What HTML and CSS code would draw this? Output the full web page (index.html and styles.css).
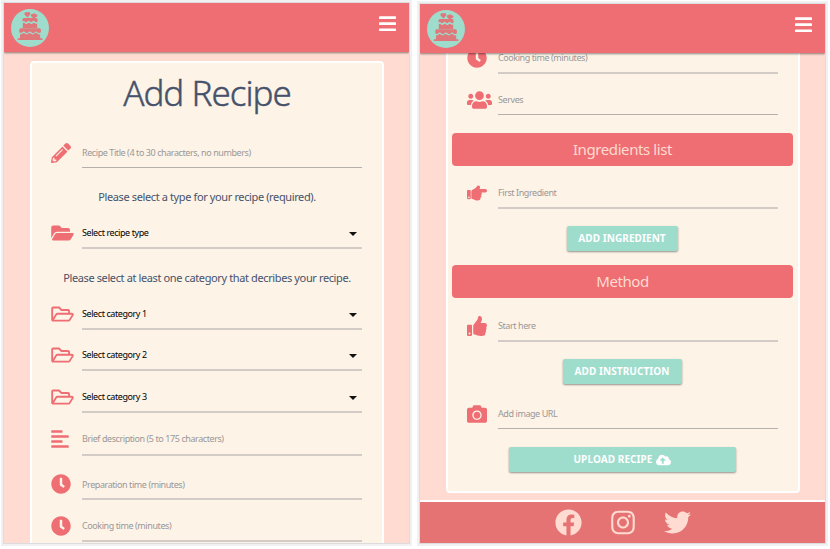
FILE: index.html
```html
<!DOCTYPE html>
<html lang="en">
<head>
<meta charset="utf-8">
<title>Add Recipe</title>
<link rel="stylesheet" href="styles.css">
</head>
<body>
<svg class="defs" width="0" height="0" aria-hidden="true">
  <symbol id="bars" viewBox="0 0 448 512"><path d="M16 132h416c8.837 0 16-7.163 16-16V76c0-8.837-7.163-16-16-16H16C7.163 60 0 67.163 0 76v40c0 8.837 7.163 16 16 16zm0 160h416c8.837 0 16-7.163 16-16v-40c0-8.837-7.163-16-16-16H16c-8.837 0-16 7.163-16 16v40c0 8.837 7.163 16 16 16zm0 160h416c8.837 0 16-7.163 16-16v-40c0-8.837-7.163-16-16-16H16c-8.837 0-16 7.163-16 16v40c0 8.837 7.163 16 16 16z"/></symbol>
  <symbol id="pencil" viewBox="0 0 512 512"><path d="M497.9 142.1l-46.1 46.1c-4.7 4.7-12.3 4.7-17 0l-111-111c-4.7-4.7-4.7-12.3 0-17l46.1-46.1c18.7-18.7 49.1-18.7 67.9 0l60.1 60.1c18.8 18.7 18.8 49.1 0 67.9zM284.2 99.8L21.6 362.4.4 483.9c-2.9 16.4 11.4 30.6 27.8 27.8l121.5-21.3 262.6-262.6c4.7-4.7 4.7-12.3 0-17l-111-111c-4.8-4.7-12.4-4.7-17.1 0zM124.1 339.9c-5.5-5.5-5.5-14.3 0-19.8l154-154c5.5-5.5 14.3-5.5 19.8 0s5.5 14.3 0 19.8l-154 154c-5.5 5.5-14.3 5.5-19.8 0zM88 424h48v36.3l-64.5 11.3-31.1-31.1L51.7 376H88v48z"/></symbol>
  <symbol id="folder-solid" viewBox="0 0 576 512"><path d="M572.694 292.093L500.27 416.248A63.997 63.997 0 0 1 444.989 448H45.025c-18.523 0-30.064-20.093-20.731-36.093l72.424-124.155A64 64 0 0 1 152 256h399.964c18.523 0 30.064 20.093 20.73 36.093zM152 224h328v-48c0-26.51-21.49-48-48-48H272l-64-64H48C21.49 64 0 85.49 0 112v278.046l69.077-118.418C86.214 242.25 117.989 224 152 224z"/></symbol>
  <symbol id="folder" viewBox="0 0 576 512"><path d="M527.9 224H480v-48c0-26.5-21.5-48-48-48H272l-64-64H48C21.5 64 0 85.5 0 112v288c0 26.5 21.5 48 48 48h400c16.5 0 31.9-8.5 40.7-22.6l79.9-128c20-31.9-3-73.4-40.7-73.4zM48 118c0-3.3 2.7-6 6-6h134.1l64 64H426c3.3 0 6 2.7 6 6v42H152c-16.8 0-32.4 8.8-41.1 23.2L48 351.4zm400 282H72l77.2-128H528z"/></symbol>
  <symbol id="align" viewBox="0 0 448 512"><path d="M12.83 352h262.34A12.82 12.82 0 0 0 288 339.17v-38.34A12.82 12.82 0 0 0 275.17 288H12.83A12.82 12.82 0 0 0 0 300.83v38.34A12.82 12.82 0 0 0 12.83 352zm0-256h262.34A12.82 12.82 0 0 0 288 83.17V44.83A12.82 12.82 0 0 0 275.17 32H12.83A12.82 12.82 0 0 0 0 44.83v38.34A12.82 12.82 0 0 0 12.83 96zM432 160H16a16 16 0 0 0-16 16v32a16 16 0 0 0 16 16h416a16 16 0 0 0 16-16v-32a16 16 0 0 0-16-16zm0 256H16a16 16 0 0 0-16 16v32a16 16 0 0 0 16 16h416a16 16 0 0 0 16-16v-32a16 16 0 0 0-16-16z"/></symbol>
  <symbol id="clock" viewBox="0 0 512 512"><path d="M256,8C119,8,8,119,8,256S119,504,256,504,504,393,504,256,393,8,256,8Zm92.49,313h0l-20,25a16,16,0,0,1-22.49,2.5h0l-67-49.72a40,40,0,0,1-15-31.23V112a16,16,0,0,1,16-16h32a16,16,0,0,1,16,16V256l58,42.5A16,16,0,0,1,348.49,321Z"/></symbol>
  <symbol id="users" viewBox="0 0 640 512"><path d="M96 224c35.3 0 64-28.7 64-64s-28.7-64-64-64-64 28.7-64 64 28.7 64 64 64zm448 0c35.3 0 64-28.7 64-64s-28.7-64-64-64-64 28.7-64 64 28.7 64 64 64zm32 32h-64c-17.6 0-33.5 7.1-45.1 18.6 40.3 22.1 68.9 62 75.1 109.4h66c17.7 0 32-14.3 32-32v-32c0-35.3-28.7-64-64-64zm-256 0c61.9 0 112-50.1 112-112S381.9 32 320 32 208 82.1 208 144s50.1 112 112 112zm76.8 32h-8.3c-20.8 10-43.9 16-68.5 16s-47.6-6-68.5-16h-8.3C179.6 288 128 339.6 128 403.2V432c0 26.5 21.5 48 48 48h288c26.5 0 48-21.5 48-48v-28.8c0-63.6-51.6-115.2-115.2-115.2zm-223.7-13.4C161.5 263.1 145.6 256 128 256H64c-35.3 0-64 28.7-64 64v32c0 17.7 14.3 32 32 32h65.9c6.3-47.4 34.9-87.3 75.2-109.4z"/></symbol>
  <symbol id="point" viewBox="0 0 512 512"><path d="M512 199.652c0 23.625-20.65 43.826-44.8 43.826h-99.851c16.34 17.048 18.346 49.766-6.299 70.944 14.288 22.829 2.147 53.017-16.45 62.315C353.574 425.878 322.654 448 272 448c-2.746 0-13.276-.203-16-.195-61.971.168-76.894-31.065-123.731-38.315C120.596 407.683 112 397.599 112 385.786V214.261l.002-.001c.011-18.366 10.607-35.889 28.464-43.845 28.886-12.994 95.413-49.038 107.534-77.323 7.797-18.194 21.384-29.084 40-29.092 34.222-.014 57.752 35.098 44.119 66.908-3.583 8.359-8.312 16.67-14.153 24.918H467.2c23.45 0 44.8 20.543 44.8 43.826zM96 200v192c0 13.255-10.745 24-24 24H24c-13.255 0-24-10.745-24-24V200c0-13.255 10.745-24 24-24h48c13.255 0 24 10.745 24 24zM68 368c0-11.046-8.954-20-20-20s-20 8.954-20 20 8.954 20 20 20 20-8.954 20-20z"/></symbol>
  <symbol id="thumb" viewBox="0 0 512 512"><path d="M104 224H24c-13.255 0-24 10.745-24 24v240c0 13.255 10.745 24 24 24h80c13.255 0 24-10.745 24-24V248c0-13.255-10.745-24-24-24zM64 472c-13.255 0-24-10.745-24-24s10.745-24 24-24 24 10.745 24 24-10.745 24-24 24zM384 81.452c0 42.416-25.97 66.208-33.277 94.548h101.723c33.397 0 59.397 27.746 59.553 58.098.084 17.938-7.546 37.249-19.439 49.197l-.11.11c9.836 23.337 8.237 56.037-9.308 79.469 8.681 25.895-.069 57.704-16.382 74.757 4.298 17.598 2.244 32.575-6.148 44.632C440.202 511.587 389.616 512 346.839 512l-2.845-.001c-48.287-.017-87.806-17.598-119.56-31.725-15.957-7.099-36.821-15.887-52.651-16.178-6.54-.12-11.783-5.457-11.783-11.998v-213.77c0-3.2 1.282-6.271 3.558-8.521 39.614-39.144 56.648-80.587 89.117-113.111 14.804-14.832 20.188-37.236 25.393-58.902C282.515 39.293 291.817 0 312 0c24 0 72 8 72 81.452z"/></symbol>
  <symbol id="camera" viewBox="0 0 512 512"><path d="M512 144v288c0 26.5-21.5 48-48 48H48c-26.5 0-48-21.5-48-48V144c0-26.5 21.5-48 48-48h88l12.3-32.9c7-18.7 24.9-31.1 44.9-31.1h125.5c20 0 37.9 12.4 44.9 31.1L376 96h88c26.5 0 48 21.5 48 48zM376 288c0-66.2-53.8-120-120-120s-120 53.8-120 120 53.8 120 120 120 120-53.8 120-120zm-32 0c0 48.5-39.5 88-88 88s-88-39.5-88-88 39.5-88 88-88 88 39.5 88 88z"/></symbol>
  <symbol id="upload" viewBox="0 0 640 512"><path d="M537.6 226.6c4.1-10.7 6.4-22.4 6.4-34.6 0-53-43-96-96-96-19.7 0-38.1 6-53.3 16.2C367 64.2 315.3 32 256 32c-88.4 0-160 71.6-160 160 0 2.7.1 5.4.2 8.1C40.2 219.8 0 273.2 0 336c0 79.5 64.5 144 144 144h368c70.7 0 128-57.3 128-128 0-61.9-44-113.6-102.4-125.4zM393.4 288H328v112c0 8.8-7.2 16-16 16h-48c-8.8 0-16-7.2-16-16V288h-65.4c-14.3 0-21.4-17.2-11.3-27.3l105.4-105.4c6.2-6.2 16.4-6.2 22.6 0l105.4 105.4c10.1 10.1 2.9 27.3-11.3 27.3z"/></symbol>
  <symbol id="cake" viewBox="0 0 38 38">
    <circle class="plate" cx="19" cy="19" r="19"/>
    <path class="tier" d="M16.6 8.6l-2.7-2.5a1.7 1.7 0 0 1 2.3-2.5 1.7 1.7 0 0 1 3 .6 2 2 0 0 1-.5 1.9zM22.5 9.4l-2.3-2.2a1.5 1.5 0 0 1 2-2.2 1.5 1.5 0 0 1 2.4.2 1.5 1.5 0 0 1 1.6 2.2zM11.500 10.600q0-1.500 1.500-1.500h12q1.600 0 1.600 1.500v1.900q-1.300 1.300-2.700 0-1.300-1.300-2.500 0-1.300 1.300-2.500 0-1.200-1.300-2.500 0-1.200 1.300-2.500 0-1.200-.9-2.400 0zM11.800 14.300q1.300-.9 2.300.1 1.300 1.100 2.500 0 1.300-1.300 2.500 0 1.300 1.300 2.500 0 1.200-1.300 2.500 0 1 .8 2.100.2v4.300H11.800zM8.300 21q0-1.700 1.600-1.700h18.300q1.700 0 1.700 1.700v2.300q-1.600 1.400-3.200.2-1.500-1.700-3-.2-1.600 1.800-3.200 0-1.600-1.500-3.100 0-1.600 1.800-3.100 0-1.600-1.500-3.100 0-1.500 1.200-2.900 0zM9 25.500q1.400 0 2.500-1 1.400-.9 2.700.3 1.600 1.300 3.200-.2 1.500-1.300 2.900.1 1.600 1.400 3.200-.1 1.500-1.500 3 .1 1.200 1 2.700.8v3.700h2.200v1.800H6.800v-1.800H9z"/>
  </symbol>
</svg>

<main class="board">
  <section class="phone phone-top">
    <header class="nav">
      <svg class="logo"><use href="#cake"/></svg>
      <svg class="menu"><use href="#bars"/></svg>
    </header>
    <div class="page">
      <form class="card">
        <h1 class="title">Add Recipe</h1>
        <div class="row"><svg class="icon"><use href="#pencil"/></svg><div class="field thin"><span>Recipe Title (4 to 30 characters, no numbers)</span></div></div>
        <p class="hint">Please select a type for your recipe (required).</p>
        <div class="row"><svg class="icon folder"><use href="#folder-solid"/></svg><div class="field select"><span>Select recipe type</span><i class="caret"></i></div></div>
        <p class="hint hint-low">Please select at least one category that decribes your recipe.</p>
        <div class="row"><svg class="icon folder"><use href="#folder"/></svg><div class="field select"><span>Select category 1</span><i class="caret"></i></div></div>
        <div class="row gap-11"><svg class="icon folder"><use href="#folder"/></svg><div class="field select"><span>Select category 2</span><i class="caret"></i></div></div>
        <div class="row gap-12"><svg class="icon folder"><use href="#folder"/></svg><div class="field select"><span>Select category 3</span><i class="caret"></i></div></div>
        <div class="row gap-13"><svg class="icon align"><use href="#align"/></svg><div class="field raised"><span>Brief description (5 to 175 characters)</span></div></div>
        <div class="row gap-14"><svg class="icon"><use href="#clock"/></svg><div class="field lowered"><span>Preparation time (minutes)</span></div></div>
        <div class="row gap-12"><svg class="icon"><use href="#clock"/></svg><div class="field"><span>Cooking time (minutes)</span></div></div>
      </form>
    </div>
  </section>

  <section class="phone phone-bottom">
    <header class="nav">
      <svg class="logo"><use href="#cake"/></svg>
      <svg class="menu"><use href="#bars"/></svg>
    </header>
    <div class="page">
      <form class="card card-end">
        <div class="row"><svg class="icon"><use href="#clock"/></svg><div class="field"><span>Cooking time (minutes)</span></div></div>
        <div class="row gap-12"><svg class="icon users"><use href="#users"/></svg><div class="field thin"><span>Serves</span></div></div>
        <h2 class="bar">Ingredients list</h2>
        <div class="row"><svg class="icon"><use href="#point"/></svg><div class="field"><span>First Ingredient</span></div></div>
        <button type="button" class="btn btn-ingredient">Add Ingredient</button>
        <h2 class="bar bar-method">Method</h2>
        <div class="row"><svg class="icon"><use href="#thumb"/></svg><div class="field"><span>Start here</span></div></div>
        <button type="button" class="btn btn-step">Add Instruction</button>
        <div class="row gap-16"><svg class="icon"><use href="#camera"/></svg><div class="field thin"><span>Add image URL</span></div></div>
        <button type="button" class="btn btn-upload"><span>Upload Recipe</span><svg class="cloud"><use href="#upload"/></svg></button>
      </form>
    </div>
    <footer class="footer">
      <svg class="fb" viewBox="0 0 512 512"><path d="M504 256C504 119 393 8 256 8S8 119 8 256c0 123.78 90.69 226.38 209.25 245V327.69h-63V256h63v-54.64c0-62.15 37-96.48 93.67-96.48 27.14 0 55.52 4.84 55.52 4.84v61h-31.28c-30.8 0-40.41 19.12-40.41 38.73V256h68.78l-11 71.69h-57.78V501C413.31 482.38 504 379.78 504 256z"/></svg>
      <svg class="ig" viewBox="0 0 448 512"><path d="M224.1 141c-63.6 0-114.9 51.3-114.9 114.9s51.3 114.9 114.9 114.9S339 319.5 339 255.9 287.7 141 224.1 141zm0 189.6c-41.1 0-74.7-33.5-74.7-74.7s33.5-74.7 74.7-74.7 74.7 33.5 74.7 74.7-33.6 74.7-74.7 74.7zm146.4-194.3c0 14.9-12 26.8-26.8 26.8-14.9 0-26.8-12-26.8-26.8s12-26.8 26.8-26.8 26.8 12 26.8 26.8zm76.1 27.2c-1.7-35.9-9.9-67.7-36.2-93.9-26.2-26.2-58-34.4-93.9-36.2-37-2.1-147.9-2.1-184.9 0-35.8 1.7-67.6 9.9-93.9 36.1s-34.4 58-36.2 93.9c-2.1 37-2.1 147.9 0 184.9 1.7 35.9 9.9 67.7 36.2 93.9s58 34.4 93.9 36.2c37 2.1 147.9 2.1 184.9 0 35.9-1.7 67.7-9.9 93.9-36.2 26.2-26.2 34.4-58 36.2-93.9 2.1-37 2.1-147.8 0-184.8zM398.8 388c-7.8 19.6-22.9 34.7-42.6 42.6-29.5 11.7-99.5 9-132.1 9s-102.7 2.6-132.1-9c-19.6-7.8-34.7-22.9-42.6-42.6-11.7-29.5-9-99.5-9-132.1s-2.6-102.7 9-132.1c7.8-19.6 22.9-34.7 42.6-42.6 29.5-11.7 99.5-9 132.1-9s102.7-2.6 132.1 9c19.6 7.8 34.7 22.9 42.6 42.6 11.7 29.5 9 99.5 9 132.1s2.7 102.7-9 132.1z"/></svg>
      <svg class="tw" viewBox="0 0 512 512"><path d="M459.37 151.716c.325 4.548.325 9.097.325 13.645 0 138.72-105.583 298.558-298.558 298.558-59.452 0-114.68-17.219-161.137-47.106 8.447.974 16.568 1.299 25.34 1.299 49.055 0 94.213-16.568 130.274-44.832-46.132-.975-84.792-31.188-98.112-72.772 6.498.974 12.995 1.624 19.818 1.624 9.421 0 18.843-1.3 27.614-3.573-48.081-9.747-84.143-51.98-84.143-102.985v-1.299c13.969 7.797 30.214 12.67 47.431 13.319-28.264-18.843-46.781-51.005-46.781-87.391 0-19.492 5.197-37.36 14.294-52.954 51.655 63.675 129.3 105.258 216.365 109.807-1.624-7.797-2.599-15.918-2.599-24.04 0-57.828 46.782-104.934 104.934-104.934 30.213 0 57.502 12.67 76.67 33.137 23.715-4.548 46.456-13.32 66.599-25.34-7.798 24.366-24.366 44.833-46.132 57.827 21.117-2.273 41.584-8.122 60.426-16.243-14.292 20.791-32.161 39.308-52.628 54.253z"/></svg>
    </footer>
  </section>
</main>
</body>
</html>
```
FILE: styles.css
```css
* { box-sizing: border-box; }

body {
  margin: 0;
  background: #fff;
  color: #46526b;
  font-family: "Noto Sans", "Open Sans", sans-serif;
  overflow: hidden;
}

.defs { display: block; height: 0; }

.board {
  display: flex;
  gap: 11px;
  height: 549px;
  padding: 3px 5px 0 4px;
}

.phone {
  display: flex;
  flex-direction: column;
  width: 405px;
  height: 540px;
  overflow: hidden;
  background: #ffdbd1;
  box-shadow: 0 0 0 1px #dcdcde, 0 0 0 3px #f1f1f3;
}

.phone-bottom {
  height: 539px;
  margin-top: 1px;
}

.nav {
  position: relative;
  display: flex;
  flex: none;
  align-items: center;
  justify-content: space-between;
  height: 49px;
  padding: 0 13px 0 7px;
  background: #ee6e73;
  box-shadow: 0 1px 2px rgba(0, 0, 0, .45);
}

.logo { width: 38px; height: 38px; margin-top: 1px; }
.plate { fill: #9edccc; }
.tier { fill: #e0777a; }
.menu { width: 17px; height: 19.4px; margin-bottom: 7px; fill: #fff; }

.page {
  flex: 1;
  min-height: 0;
  padding: 9px 26px 0;
}

.phone-bottom .page { padding-top: 0; }

.card {
  display: flex;
  flex-direction: column;
  width: 354px;
  height: 600px;
  border: 2px solid #fff;
  border-radius: 4px;
  background: #fdf3e7;
}

.card-end {
  height: 451px;
  margin-top: -11px;
}

.title {
  height: 76px;
  margin: 0;
  padding-top: 3px;
  font-size: 35px;
  font-weight: 300;
  letter-spacing: -1px;
  line-height: 54px;
  text-align: center;
  -webkit-text-stroke: .4px #46526b;
}

.row {
  display: flex;
  flex: none;
  align-items: flex-start;
  height: 30px;
  padding-left: 19px;
}

.gap-11 { margin-top: 11px; }
.gap-12 { margin-top: 12px; }
.gap-13 { margin-top: 13px; }
.gap-14 { margin-top: 14px; }
.gap-16 { margin-top: 16px; }

.icon {
  flex: none;
  width: 20px;
  height: 20px;
  margin: 4px 11px 0 0;
  fill: #ee6e73;
}

.icon.folder { width: 23px; margin-right: 8px; }
.icon.align { width: 18px; margin: 3px 13px 0 0; }
.icon.users { width: 25px; margin-right: 6px; }

.field {
  display: flex;
  align-items: center;
  justify-content: space-between;
  width: 280px;
  height: 30px;
  border-bottom: 2px solid #d3cbc5;
  color: #9a9898;
  font-size: 9px;
  letter-spacing: -.42px;
  line-height: 28px;
  white-space: nowrap;
}

.field.thin { height: 29px; border-bottom: 1px solid #b5b0ac; }
.field.raised { padding-bottom: 2px; line-height: 26px; }
.field.lowered { padding-top: 2px; line-height: 26px; }
.select { color: #000; }

.caret {
  margin: 1px 5px 0 0;
  border: 4px solid transparent;
  border-top-color: #111;
  border-bottom: 0;
}

.hint {
  height: 50px;
  margin: 0;
  padding-top: 6px;
  font-size: 11px;
  letter-spacing: -.38px;
  line-height: 43px;
  text-align: center;
  white-space: nowrap;
}

.hint-low { height: 51px; padding-top: 7px; }

.bar {
  flex: none;
  height: 33px;
  margin: 17px 5px 13px 4px;
  border-radius: 4px;
  background: #ee6e73;
  color: #ffdbd1;
  font-size: 15px;
  font-weight: 400;
  letter-spacing: -.4px;
  line-height: 32px;
  text-align: center;
}

.bar-method { margin: 14px 5px 14px 4px; }

.btn {
  display: flex;
  flex: none;
  align-items: center;
  align-self: center;
  justify-content: center;
  height: 25px;
  margin: 17px 2px 0 0;
  padding: 0;
  border: 0;
  border-radius: 2px;
  background: #9edccc;
  box-shadow: 0 1px 2px rgba(0, 0, 0, .4);
  color: #fff;
  font: 700 10px/25px "Noto Sans", sans-serif;
  letter-spacing: .08px;
  text-transform: uppercase;
  white-space: nowrap;
}

.btn-ingredient { width: 111px; }
.btn-step { width: 119px; }
.btn-upload { width: 227px; gap: 3px; }
.cloud { width: 15px; height: 12px; fill: #fff; }

.footer {
  display: flex;
  flex: none;
  align-items: center;
  justify-content: center;
  height: 43px;
  border-top: 2px solid #fff;
  background: #e57373;
}

.footer svg { fill: #ffdbd1; }
.fb { width: 27px; height: 27px; }
.ig { width: 24px; height: 27px; margin: 0 29px; }
.tw { width: 27px; height: 27px; }
```
